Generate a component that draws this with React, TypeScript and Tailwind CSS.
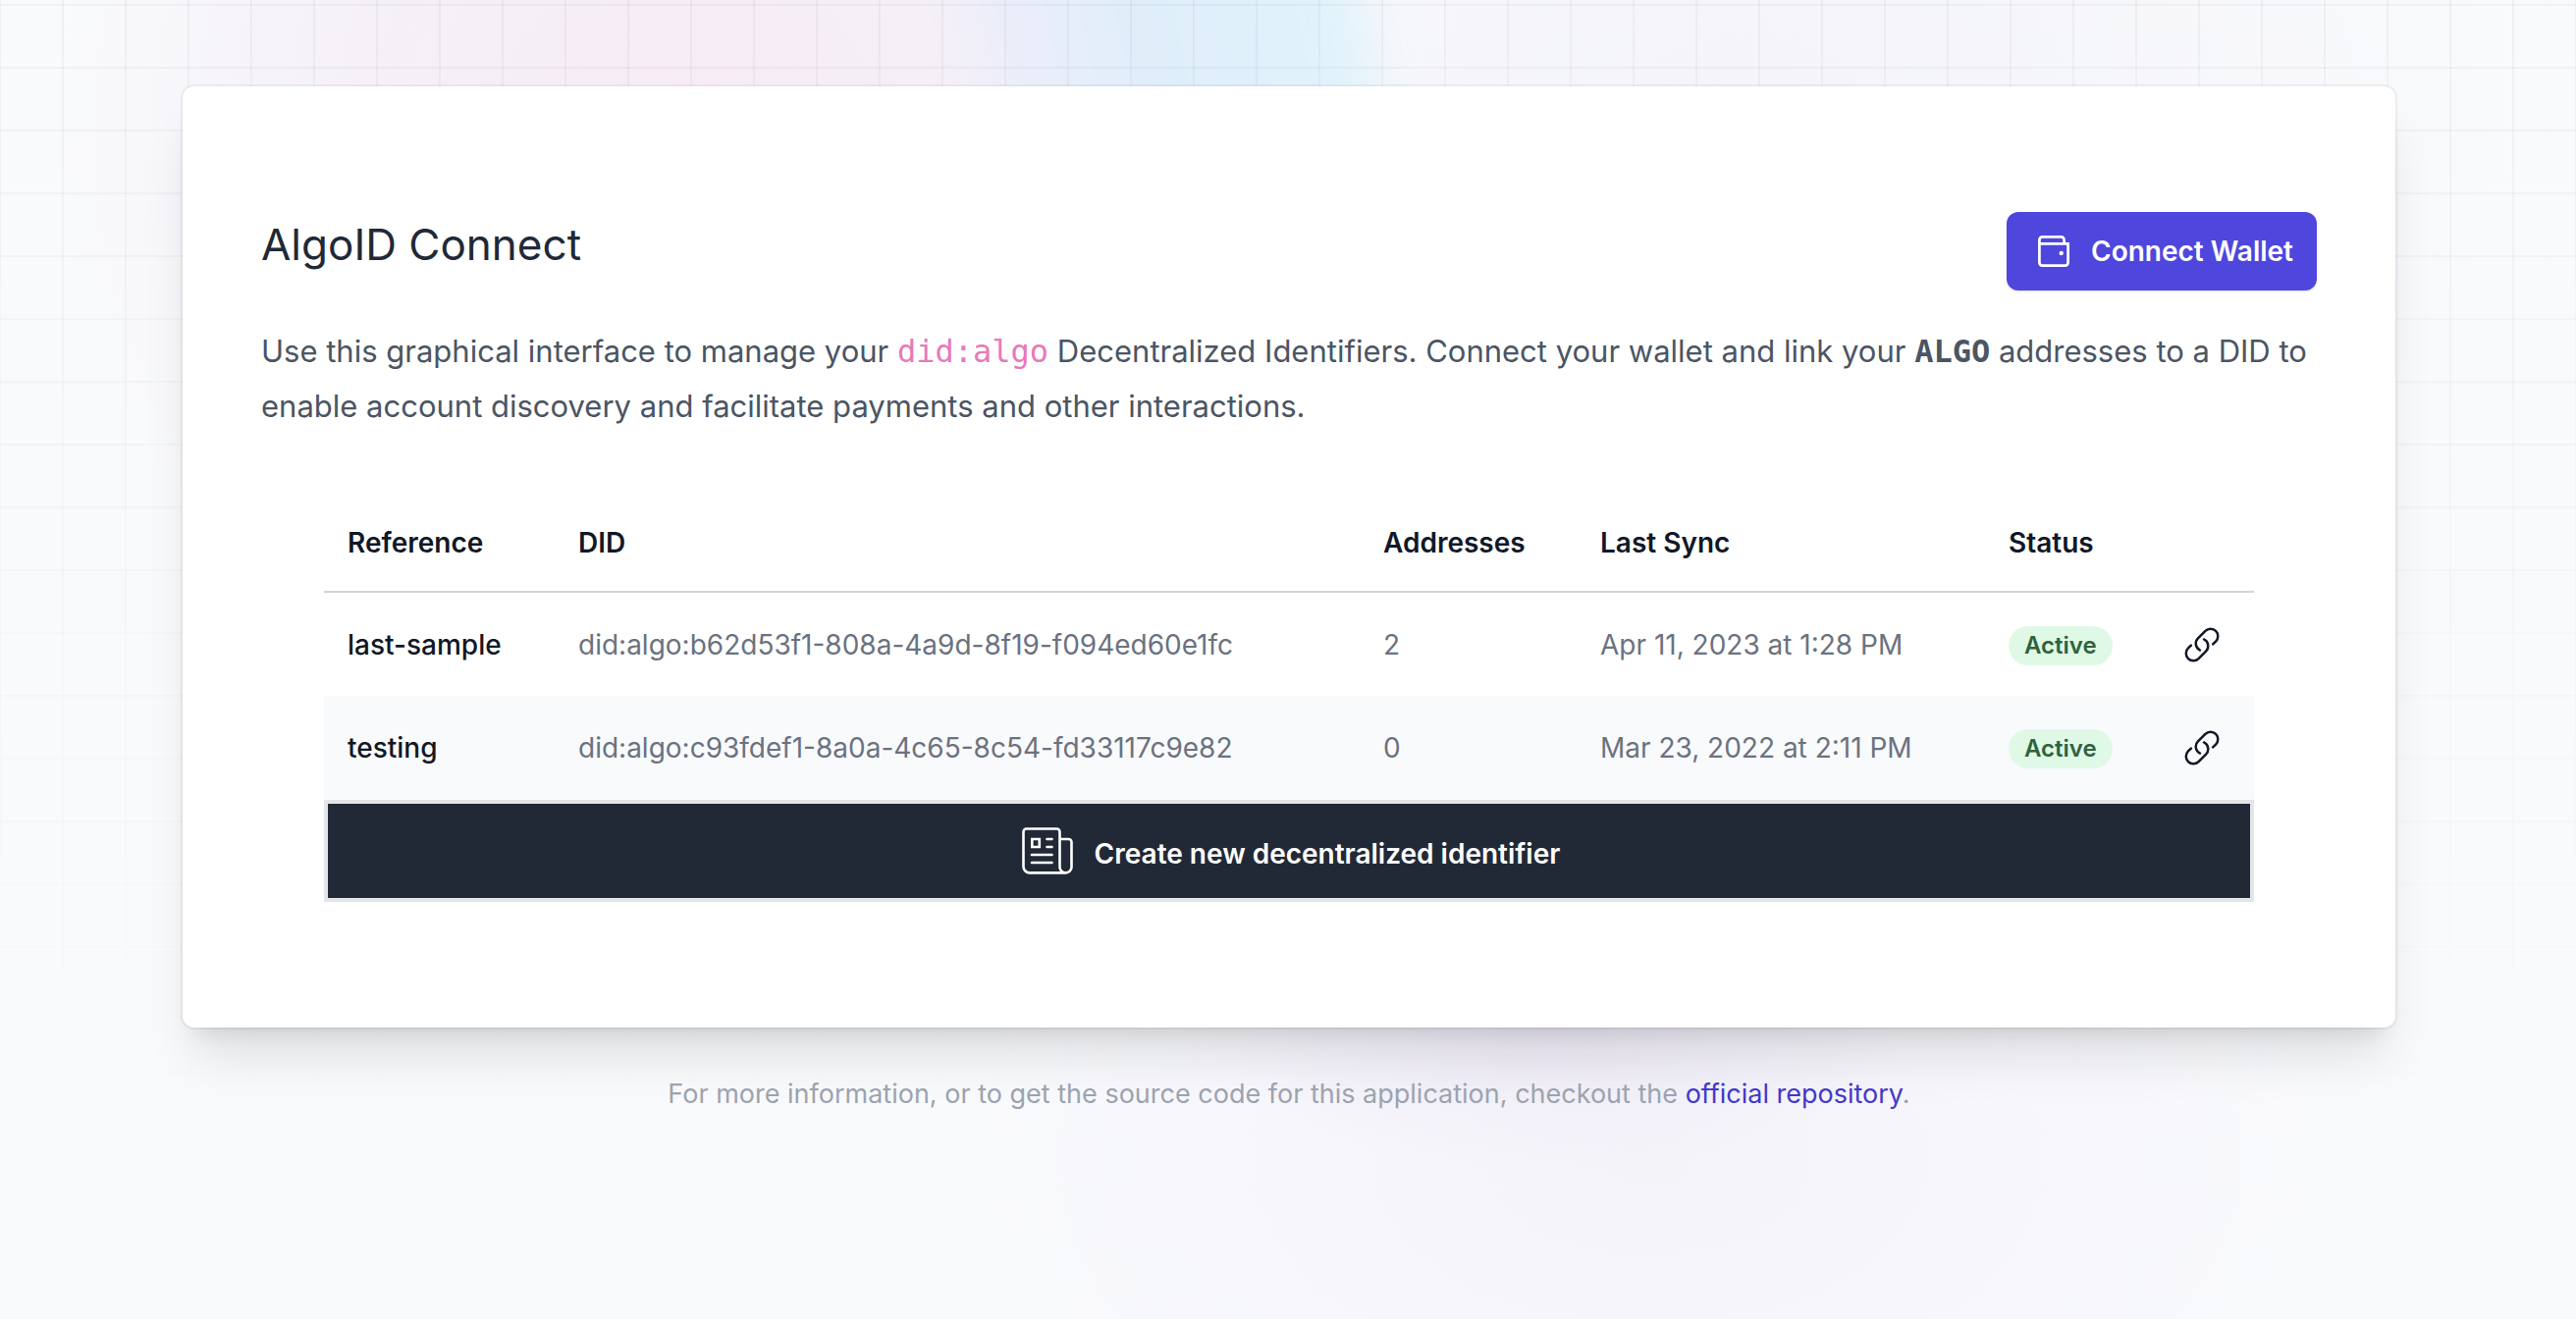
const rows = [
  { name: 'last-sample', did: 'did:algo:b62d53f1-808a-4a9d-8f19-f094ed60e1fc', addresses: 2, sync: 'Apr 11, 2023 at 1:28 PM' },
  { name: 'testing', did: 'did:algo:c93fdef1-8a0a-4c65-8c54-fd33117c9e82', addresses: 0, sync: 'Mar 23, 2022 at 2:11 PM' },
];

function WalletIcon() {
  return (
    <svg className="h-8 w-8" viewBox="0 0 32 32" fill="none" stroke="currentColor" strokeWidth="2.75" aria-hidden="true">
      <path d="M1.4 8.400H30.600V27.600a3 3 0 0 1-3 3H4.400a3 3 0 0 1-3-3V4.400a3 3 0 0 1 3-3H23.600a3 3 0 0 1 3 3V8.400" />
      <circle cx="23.700" cy="18" r="2.200" fill="currentColor" stroke="none" />
    </svg>
  );
}

function NewspaperIcon() {
  return (
    <svg className="h-12 w-13" viewBox="0 0 52 48" fill="none" stroke="currentColor" strokeWidth="2.600" strokeLinecap="round" aria-hidden="true">
      <path d="M44.500 46.400H8a6.500 6.500 0 0 1-6.500-6.500V4.500a3 3 0 0 1 3-3H35.500a3 3 0 0 1 3 3V40.400a6 6 0 0 0 12 0V15a3 3 0 0 0-3-3H38.500" />
      <path d="M10.300 12h7.500v8h-7.500z" />
      <path d="M25.500 12H30.500M25.500 20H30.500M10 28H30.500M10 36H30.500" />
    </svg>
  );
}

function LinkIcon() {
  return (
    <svg className="h-10 w-10" viewBox="0 0 24 24" fill="none" stroke="currentColor" strokeWidth="1.5" strokeLinecap="round" strokeLinejoin="round" aria-hidden="true">
      <path d="M13.19 8.688a4.5 4.5 0 0 1 1.242 7.244l-4.5 4.5a4.5 4.5 0 0 1-6.364-6.364l1.757-1.757m13.35-.622 1.757-1.757a4.5 4.5 0 0 0-6.364-6.364l-4.5 4.5a4.5 4.5 0 0 0 1.242 7.244" />
    </svg>
  );
}

export default function App() {
  return (
    <div className="relative isolate min-h-screen overflow-hidden bg-[#f9fafc] pt-[88px] pr-[184px] pb-16 pl-[186px] font-['Inter',sans-serif] text-[#1f2937]">
      <div className="absolute inset-0 -z-20 bg-[radial-gradient(640px_620px_at_700px_140px,#f7ebf3_0%,#f5f0f7_50%,transparent_100%),radial-gradient(760px_560px_at_1780px_140px,#f4f4f9_0%,transparent_100%),radial-gradient(360px_140px_at_1580px_1050px,#efebf7_0%,transparent_100%),radial-gradient(700px_420px_at_1680px_1180px,#f4f3f9_0%,#f7f7fc_60%,transparent_100%)]" />
      <div className="absolute -top-32 left-[980px] -z-20 h-72 w-[410px] skew-x-12 rounded-[80px] bg-[linear-gradient(to_right,#efeefa,#dfeefa_45%,#e2f3fc)] blur-[24px]" />
      <div className="absolute inset-x-0 top-0 -z-10 h-[1160px] bg-[linear-gradient(to_right,#0f172a0a_2px,transparent_2px),linear-gradient(to_bottom,#0f172a0a_2px,transparent_2px)] bg-[size:64px_64px] bg-[position:-1px_4px] [mask-image:linear-gradient(to_bottom,black,transparent)]" />

      <main className="rounded-xl bg-white px-20 py-32 shadow-[0_0_0_2px_rgba(17,24,39,0.05),0_40px_50px_-10px_rgba(0,0,0,0.1),0_16px_20px_-12px_rgba(0,0,0,0.1)]">
        <header className="flex items-start justify-between">
          <h1 className="text-[44px] leading-[66px]">AlgoID Connect</h1>
          <button type="button" className="flex h-20 items-center rounded-xl bg-[#4f46dd] pr-6 pl-8 text-[28px] font-semibold text-white shadow-sm">
            <WalletIcon />
            <span className="ml-[22px]">Connect Wallet</span>
          </button>
        </header>

        <p className="mt-[34px] text-[31px] leading-14 text-[#4b5563]">
          Use this graphical interface to manage your{' '}
          <code className="font-['DejaVu_Sans_Mono',monospace] text-[32px] leading-none text-[#e879b9]">did:algo</code> Decentralized Identifiers. Connect your wallet and link your{' '}
          <strong className="font-['DejaVu_Sans_Mono',monospace] text-[32px] leading-none font-bold">ALGO</strong> addresses to a DID to enable account discovery and facilitate payments and other interactions.
        </p>

        <div className="mt-[61px] px-16">
          <table className="w-full table-fixed text-left text-[28px] leading-10">
            <colgroup>
              <col className="w-[235px]" />
              <col />
              <col className="w-[221px]" />
              <col className="w-[416px]" />
              <col className="w-[177px]" />
              <col className="w-[97px]" />
            </colgroup>
            <thead className="border-b-2 border-[#d1d5db] text-[#111827]">
              <tr className="h-[100px]">
                <th scope="col" className="px-6 font-semibold">Reference</th>
                <th scope="col" className="px-6 font-semibold">DID</th>
                <th scope="col" className="px-6 font-semibold">Addresses</th>
                <th scope="col" className="px-6 font-semibold">Last Sync</th>
                <th scope="col" className="px-6 font-semibold">Status</th>
                <th scope="col" aria-label="Link" />
              </tr>
            </thead>
            <tbody className="text-[#6b7280]">
              {rows.map((row) => (
                <tr key={row.name} className="h-[106px] even:bg-[#f9fafc]">
                  <td className="px-6 font-medium text-[#111827]">{row.name}</td>
                  <td className="px-6 whitespace-nowrap">{row.did}</td>
                  <td className="px-6">{row.addresses}</td>
                  <td className="px-6 whitespace-nowrap">{row.sync}</td>
                  <td className="px-6">
                    <span className="inline-flex rounded-full bg-[#e0f9e6] px-4 text-[24px] font-semibold text-[#2f633d]">Active</span>
                  </td>
                  <td className="px-6 text-[#111827]">
                    <button type="button" className="flex" aria-label={`Link ${row.name}`}>
                      <LinkIcon />
                    </button>
                  </td>
                </tr>
              ))}
            </tbody>
          </table>
          <button type="button" className="flex h-26 w-full items-center justify-center border-4 border-[#e3e5e9] bg-[#222936] pl-1 text-[28px] font-semibold text-white">
            <NewspaperIcon />
            <span className="pt-1.5 pl-[22px]">Create new decentralized identifier</span>
          </button>
        </div>
      </main>

      <footer className="mt-12 text-center text-[27px] leading-10 text-[#9ca3af]">
        For more information, or to get the source code for this application, checkout the{' '}
        <a href="#repository" className="text-[#4338ca]">official repository</a>.
      </footer>
    </div>
  );
}
